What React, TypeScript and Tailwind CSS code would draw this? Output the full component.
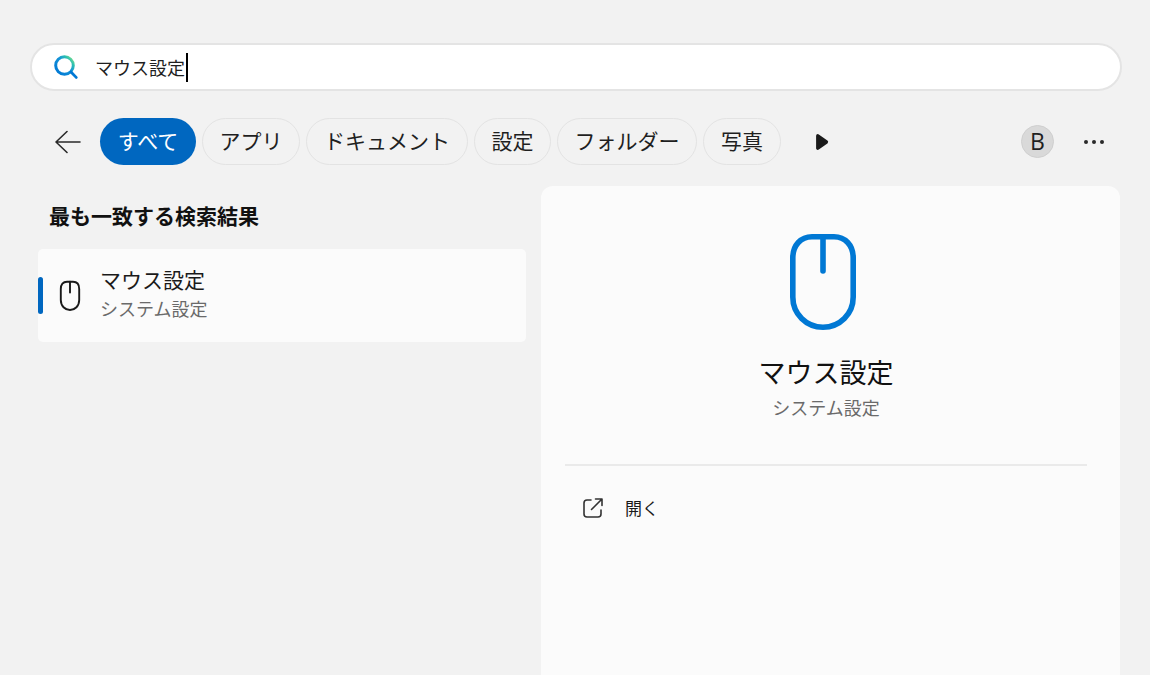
const chips = [
  { label: "すべて", width: "w-[96px]", active: true },
  { label: "アプリ", width: "w-[98px]", active: false },
  { label: "ドキュメント", width: "w-[162px]", active: false },
  { label: "設定", width: "w-[77px]", active: false },
  { label: "フォルダー", width: "w-[140px]", active: false },
  { label: "写真", width: "w-[78px]", active: false },
];

const SearchIcon = () => (
  <svg width="24" height="24" viewBox="0 0 24 24" fill="none">
    <defs>
      <linearGradient id="searchRing" x1="3" y1="18" x2="19" y2="3" gradientUnits="userSpaceOnUse">
        <stop offset="0" stopColor="#0078d4" />
        <stop offset="0.55" stopColor="#1594d8" />
        <stop offset="0.8" stopColor="#2cc0b0" />
        <stop offset="1" stopColor="#7fe08a" />
      </linearGradient>
    </defs>
    <circle cx="10.5" cy="10.5" r="8.8" stroke="url(#searchRing)" strokeWidth="3" />
    <path d="M17 17 L22.2 22.4" stroke="#0078d4" strokeWidth="2.8" strokeLinecap="round" />
  </svg>
);

const MouseIcon = ({ className, w, h, stroke, sw, vb, r, line }: { className: string; w: number; h: number; stroke: string; sw: number; vb: string; r: string; line: string }) => (
  <svg width={w} height={h} viewBox={vb} fill="none" className={className}>
    <path d={r} stroke={stroke} strokeWidth={sw} />
    <path d={line} stroke={stroke} strokeWidth={sw} strokeLinecap="round" />
  </svg>
);

const App = () => {
  return (
    <div
      className="h-[675px] w-[1150px] overflow-hidden bg-[#f2f2f2] text-[#1a1a1a]"
      style={{ fontFamily: '"Noto Sans CJK JP", "Noto Sans", sans-serif' }}
    >
      <div className="pl-[30px] pr-[28px] pt-[43px]">
        <div className="flex h-[48px] items-center rounded-full border-2 border-[#e4e4e4] bg-white pl-[22px]">
          <SearchIcon />
          <span className="ml-[17px] text-[18px] leading-none text-[#1f1f1f]">マウス設定</span>
          <span className="ml-[1px] h-[29px] w-[2px] bg-black" />
        </div>
      </div>

      <div className="mt-[27px] flex h-[47px] items-center pl-[55px]">
        <svg width="26" height="24" viewBox="0 0 26 24" fill="none" className="mr-[19px]">
          <path d="M1 12 H25 M12 1.5 L1 12 L12 22.5" stroke="#2a2a2a" strokeWidth="1.6" strokeLinecap="round" strokeLinejoin="round" />
        </svg>
        <div className="flex gap-[6px]">
          {chips.map((chip) => (
            <div
              key={chip.label}
              className={
                chip.active
                  ? `flex h-[47px] ${chip.width} items-center justify-center rounded-full bg-[#0067c0] pb-[2px] text-[21px] text-white`
                  : `flex h-[47px] ${chip.width} items-center justify-center rounded-full border border-[#e3e3e3] pb-[2px] text-[21px] text-[#1f1f1f]`
              }
            >
              {chip.label}
            </div>
          ))}
        </div>
        <svg width="14" height="18" viewBox="0 0 14 18" className="ml-[34px]">
          <path d="M2.8 2.8 L11.4 9 L2.8 15.2 Z" fill="#1a1a1a" stroke="#1a1a1a" strokeWidth="3.4" strokeLinejoin="round" />
        </svg>
        <div className="ml-[192px] flex h-[33px] w-[33px] items-center justify-center rounded-full border border-[#cfcfcf] bg-[#d9d9d9] text-[23px] text-[#1f1f1f]" style={{ fontFamily: '"Open Sans", sans-serif' }}>
          B
        </div>
        <div className="ml-[30px] flex gap-[4px]">
          <span className="h-[4px] w-[4px] rounded-full bg-[#2a2a2a]" />
          <span className="h-[4px] w-[4px] rounded-full bg-[#2a2a2a]" />
          <span className="h-[4px] w-[4px] rounded-full bg-[#2a2a2a]" />
        </div>
      </div>

      <div className="mt-[21px] flex pl-[38px]">
        <div className="w-[488px]">
          <h2 className="mt-[14px] pl-[11px] text-[21px] leading-[30px] font-bold text-[#111]">最も一致する検索結果</h2>
          <div className="relative mt-[19px] flex h-[93px] items-center rounded-[5px] bg-[#fbfbfb]">
            <span className="absolute left-0 top-[28px] h-[37px] w-[5px] rounded-full bg-[#0067c0]" />
            <MouseIcon
              className="ml-[21px]"
              w={22}
              h={32}
              vb="0 0 22 32"
              stroke="#1a1a1a"
              sw={1.9}
              r="M8 1.8 H14 C18 1.8 20.2 4.5 20.2 9 V20 C20.2 26 16 30 11 30 C6 30 1.8 26 1.8 20 V9 C1.8 4.5 4 1.8 8 1.8 Z"
              line="M11 1.8 V12.5"
            />
            <div className="ml-[19px] pb-[7px]">
              <div className="text-[21px] leading-[32px] text-[#1a1a1a]">マウス設定</div>
              <div className="text-[18px] leading-[26px] text-[#6a6a6a]">システム設定</div>
            </div>
          </div>
        </div>

        <div className="ml-[15px] flex h-[520px] w-[579px] flex-col items-center rounded-t-[12px] bg-[#fbfbfb] pr-[9px]">
          <MouseIcon
            className="mr-[7px] mt-[48px]"
            w={66}
            h={96}
            vb="0 0 66 96"
            stroke="#0078d4"
            sw={5.6}
            r="M22 2.8 H44 C55 2.8 63.2 11 63.2 24 V63 C63.2 80 49.7 93.2 33 93.2 C16.3 93.2 2.8 80 2.8 63 V24 C2.8 11 11 2.8 22 2.8 Z"
            line="M33 2.8 V37"
          />
          <div className="mt-[22px] text-[27px] leading-[40px] text-[#111]">マウス設定</div>
          <div className="mt-[2px] text-[18px] leading-[26px] text-[#6a6a6a]">システム設定</div>
          <div className="mt-[44px] h-[2px] w-[522px] bg-[#eaeaea]" />
          <div className="mt-[29px] flex w-[522px] items-center pl-[17px]">
            <svg width="22" height="22" viewBox="0 0 22 22" fill="none">
              <path d="M9 3 H5 C3 3 2 4 2 6 V17 C2 19 3 20 5 20 H16 C18 20 19 19 19 17 V13" stroke="#333" strokeWidth="1.6" strokeLinecap="round" />
              <path d="M9.5 12.5 L20 2 M13.5 2 H20 V8.5" stroke="#333" strokeWidth="1.6" strokeLinecap="round" strokeLinejoin="round" />
            </svg>
            <span className="ml-[21px] text-[17px] leading-[26px] text-[#1a1a1a]">開く</span>
          </div>
        </div>
      </div>
    </div>
  );
};

export default App;
